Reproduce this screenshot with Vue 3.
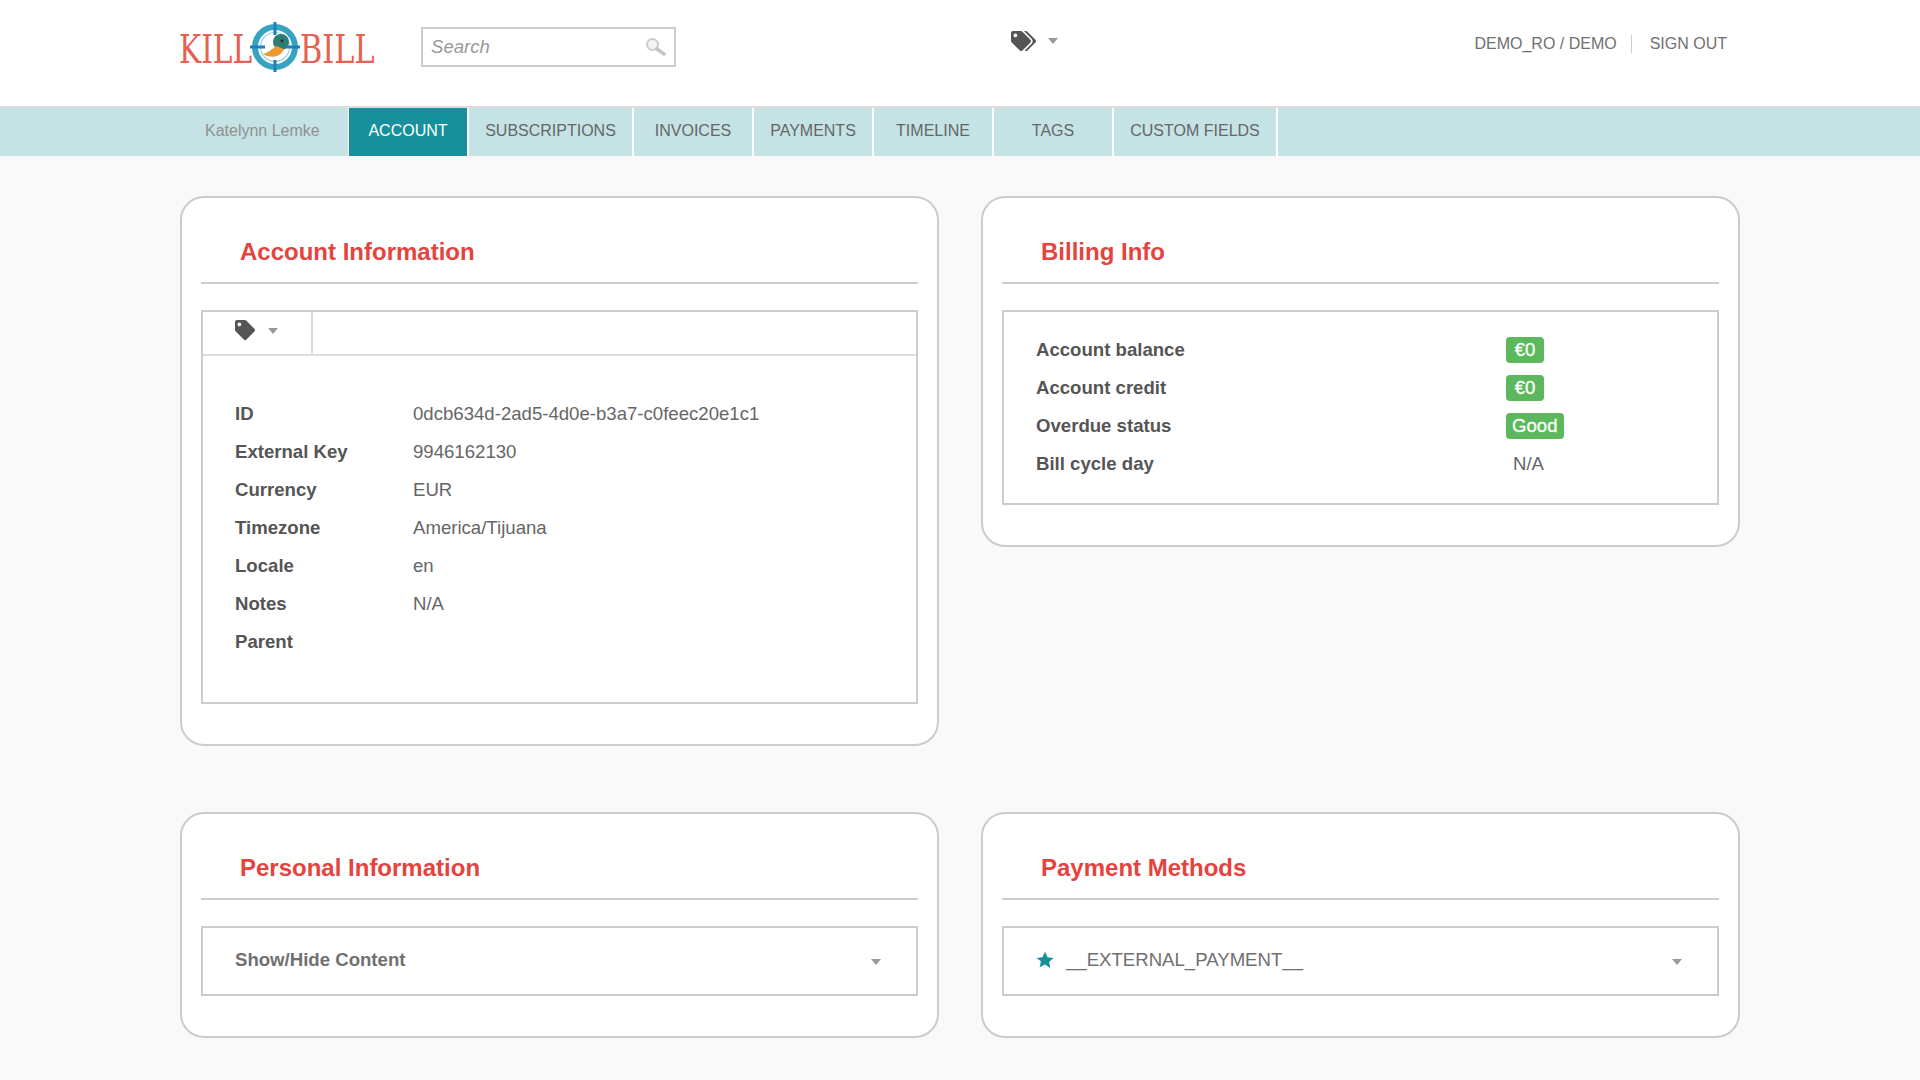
<script setup>
const tabs = [
    { name: "ACCOUNT", width: 121, active: true },
    { name: "SUBSCRIPTIONS", width: 165 },
    { name: "INVOICES", width: 120 },
    { name: "PAYMENTS", width: 120 },
    { name: "TIMELINE", width: 120 },
    { name: "TAGS", width: 120 },
    { name: "CUSTOM FIELDS", width: 164 },
];
const accountRows = [
    ["ID", "0dcb634d-2ad5-4d0e-b3a7-c0feec20e1c1"],
    ["External Key", "9946162130"],
    ["Currency", "EUR"],
    ["Timezone", "America/Tijuana"],
    ["Locale", "en"],
    ["Notes", "N/A"],
    ["Parent", ""],
];
const billingRows = [
    { label: "Account balance", value: "€0", badge: true },
    { label: "Account credit", value: "€0", badge: true },
    { label: "Overdue status", value: "Good", badge: true },
    { label: "Bill cycle day", value: "N/A", badge: false },
];
const tagPath =
    "M0 252.118V48C0 21.49 21.49 0 48 0h204.118a48 48 0 0 1 33.941 14.059l211.882 211.882c18.745 18.745 18.745 49.137 0 67.882L293.823 497.941c-18.745 18.745-49.137 18.745-67.882 0L14.059 286.059A48 48 0 0 1 0 252.118zM112 64c-26.51 0-48 21.49-48 48s21.49 48 48 48 48-21.49 48-48-21.49-48-48-48z";
const tagsPath =
    "M497.941 225.941L286.059 14.059A48 48 0 0 0 252.118 0H48C21.49 0 0 21.49 0 48v204.118a48 48 0 0 0 14.059 33.941l211.882 211.882c18.744 18.745 49.136 18.746 67.882 0l204.118-204.118c18.745-18.745 18.745-49.137 0-67.882zM112 160c-26.51 0-48-21.49-48-48s21.49-48 48-48 48 21.49 48 48-21.49 48-48 48zm513.941 133.823L421.823 497.941c-18.745 18.745-49.137 18.745-67.882 0l-.36-.36L527.64 323.522c16.999-16.999 26.36-39.6 26.36-63.64s-9.362-46.641-26.36-63.64L331.397 0h48.721a48 48 0 0 1 33.941 14.059l211.882 211.882c18.745 18.745 18.745 49.137 0 67.882z";
</script>
<template>
    <div class="page">
        <header class="header">
            <div class="container header_row">
                <svg class="logo" width="200" height="62" viewBox="0 0 200 62">
                    <text transform="translate(1 47) scale(.76 1)" class="logo_text">KILL</text>
                    <text transform="translate(122 47) scale(.78 1)" class="logo_text">BILL</text>
                    <circle cx="97" cy="31" r="20" fill="#fff" stroke="#37a3c3" stroke-width="6" />
                    <circle cx="97" cy="31" r="14.500" fill="#fff" stroke="#9fd3e2" stroke-width="1.2" />
                    <circle cx="103" cy="26" r="8" fill="#2f7d70" />
                    <path d="M85 38c5-1 9-5 13-8l8 3c-1 3-3 5-5 6-5 3-12 2-16-1z" fill="#ee9a32" />
                    <circle cx="104" cy="25" r="1.400" fill="#1c2f33" />
                    <path d="M72 31h15M107 31h15M97 6v13M97 44v12" stroke="#1f7fbc" stroke-width="3" fill="none" />
                </svg>
                <div class="search">
                    <span>Search</span>
                    <svg width="22" height="22" viewBox="0 0 22 22">
                        <circle cx="8.500" cy="8.500" r="5.500" fill="#f4f4f4" stroke="#ccc" stroke-width="2" />
                        <path d="M13 13l7 5" stroke="#c4c4c4" stroke-width="3.500" stroke-linecap="round" />
                    </svg>
                </div>
                <div class="tags_menu">
                    <svg width="25" height="20" viewBox="0 0 640 512"><path :d="tagsPath" fill="#555" /></svg>
                    <span class="caret"></span>
                </div>
                <div class="user">
                    <span>DEMO_RO / DEMO</span>
                    <span class="user_sep"></span>
                    <span>SIGN OUT</span>
                </div>
            </div>
        </header>
        <nav class="nav">
            <div class="container nav_row">
                <div class="nav_name">Katelynn Lemke</div>
                <div
                    v-for="tab in tabs"
                    :key="tab.name"
                    class="nav_tab"
                    :class="{ active: tab.active }"
                    :style="{ width: tab.width + 'px' }"
                >
                    {{ tab.name }}
                </div>
            </div>
        </nav>
        <main class="container main">
            <section class="card">
                <h2 class="card_title">Account Information</h2>
                <div class="box">
                    <div class="toolbar">
                        <div class="toolbar_btn">
                            <svg width="20" height="20" viewBox="0 0 512 512"><path :d="tagPath" fill="#555" /></svg>
                            <span class="caret"></span>
                        </div>
                    </div>
                    <div class="account_rows">
                        <div v-for="row in accountRows" :key="row[0]" class="account_row">
                            <div class="label">{{ row[0] }}</div>
                            <div class="value">{{ row[1] }}</div>
                        </div>
                    </div>
                </div>
            </section>
            <section class="card">
                <h2 class="card_title">Billing Info</h2>
                <div class="box billing_rows">
                    <div v-for="row in billingRows" :key="row.label" class="billing_row">
                        <div class="label">{{ row.label }}</div>
                        <div>
                            <span v-if="row.badge" class="badge">{{ row.value }}</span>
                            <span v-else class="value plain">{{ row.value }}</span>
                        </div>
                    </div>
                </div>
            </section>
            <section class="card">
                <h2 class="card_title">Personal Information</h2>
                <div class="box dropdown">
                    <span class="dropdown_title">Show/Hide Content</span>
                    <span class="caret"></span>
                </div>
            </section>
            <section class="card">
                <h2 class="card_title">Payment Methods</h2>
                <div class="box dropdown">
                    <span class="payment">
                        <svg width="18" height="18" viewBox="0 0 24 24">
                            <path d="M12 1l3.400 7.300 7.900 1-5.800 5.500 1.500 7.900L12 17.900l-7 3.800 1.500-7.900L.7 9.300l7.900-1z" fill="#17909b" />
                        </svg>
                        __EXTERNAL_PAYMENT__
                    </span>
                    <span class="caret"></span>
                </div>
            </section>
        </main>
    </div>
</template>
<style scoped>
.page {
    font-family: "Liberation Sans", Arial, sans-serif;
    color: #666;
    font-size: 18.6px;
}

.container {
    width: 1560px;
    margin: 0 auto;
}

.header {
    height: 106px;
    background: #fff;
    border-bottom: 2px solid #dcdcdc;
}
.header_row {
    display: flex;
    align-items: flex-start;
}
.logo {
    margin: 16px 0 0 -2px;
    flex: none;
}
.logo_text {
    font-family: "DejaVu Serif", serif;
    font-size: 39px;
    fill: #e8604f;
}

.search {
    margin: 27px 0 0 43px;
    width: 255px;
    height: 40px;
    box-sizing: border-box;
    border: 2px solid #ccc;
    padding: 0 8px;
    display: flex;
    align-items: center;
    justify-content: space-between;
    font-style: italic;
    font-size: 18.6px;
    color: #999;
}

.tags_menu {
    margin: 31px 0 0 335px;
    display: flex;
    align-items: center;
    gap: 12px;
}

.caret {
    width: 0;
    height: 0;
    border-left: 5px solid transparent;
    border-right: 5px solid transparent;
    border-top: 6px solid #999;
    flex: none;
}

.user {
    margin: 35px 13px 0 auto;
    display: flex;
    align-items: center;
    font-size: 16px;
    color: #707070;
}
.user_sep {
    width: 1px;
    height: 18px;
    background: #ccc;
    margin: 0 18px 0 14px;
}

.nav {
    height: 48px;
    background: #c5e3e5;
}
.nav_row {
    display: flex;
    height: 48px;
}
.nav_name {
    width: 168px;
    box-sizing: border-box;
    padding-left: 25px;
    line-height: 46px;
    font-size: 16px;
    color: #909090;
}
.nav_tab {
    box-sizing: border-box;
    border-right: 2px solid #fff;
    text-align: center;
    line-height: 46px;
    font-size: 16px;
    color: #666;
}
.nav_tab.active {
    background: #17909b;
    color: #fff;
    border-left: 1px solid #fff;
}

.main {
    display: grid;
    grid-template-columns: 759px 759px;
    column-gap: 42px;
    row-gap: 66px;
    align-items: start;
    padding: 40px 0 30px;
}

.card {
    box-sizing: border-box;
    background: #fff;
    border: 2px solid #ccc;
    border-radius: 24px;
    padding: 0 19px 40px;
}
.card_title {
    margin: 0 0 26px;
    height: 86px;
    box-sizing: border-box;
    border-bottom: 2px solid #ccc;
    padding: 39px 0 0 39px;
    font-size: 24px;
    line-height: 30px;
    font-weight: bold;
    color: #e5433d;
}

.box {
    border: 2px solid #ccc;
}

.toolbar {
    height: 44px;
    box-sizing: border-box;
    border-bottom: 2px solid #ddd;
}
.toolbar_btn {
    width: 110px;
    height: 42px;
    box-sizing: border-box;
    border-right: 2px solid #ddd;
    padding: 0 0 6px 32px;
    display: flex;
    align-items: center;
    gap: 13px;
}
.toolbar_btn .caret {
    margin-top: 2px;
}

.account_rows {
    padding: 39px 0 41px 32px;
}
.account_row {
    display: flex;
    height: 38px;
    align-items: center;
}
.account_row .label {
    width: 178px;
}

.label {
    font-weight: bold;
    color: #555;
}
.value {
    color: #666;
}

.billing_rows {
    padding: 19px 0 20px 32px;
}
.billing_row {
    display: flex;
    height: 38px;
    align-items: center;
}
.billing_row .label {
    width: 470px;
}
.badge {
    display: inline-block;
    min-width: 26px;
    text-align: center;
    background: #5cb85c;
    color: #fff;
    border-radius: 4px;
    padding: 0 6px;
    line-height: 26px;
    -webkit-text-stroke: 0.3px #fff;
}
.plain {
    padding-left: 7px;
}

.dropdown {
    height: 70px;
    box-sizing: border-box;
    display: flex;
    align-items: center;
    justify-content: space-between;
    padding: 0 35px 0 32px;
}
.dropdown .caret {
    margin-top: 2px;
}
.dropdown_title {
    font-weight: bold;
    color: #707070;
    margin-top: -2px;
}
.payment {
    display: flex;
    align-items: center;
    gap: 12px;
    color: #707070;
    margin-top: -2px;
}
</style>
<style>
html,
body {
    background: #f9f9f9;
}
</style>
